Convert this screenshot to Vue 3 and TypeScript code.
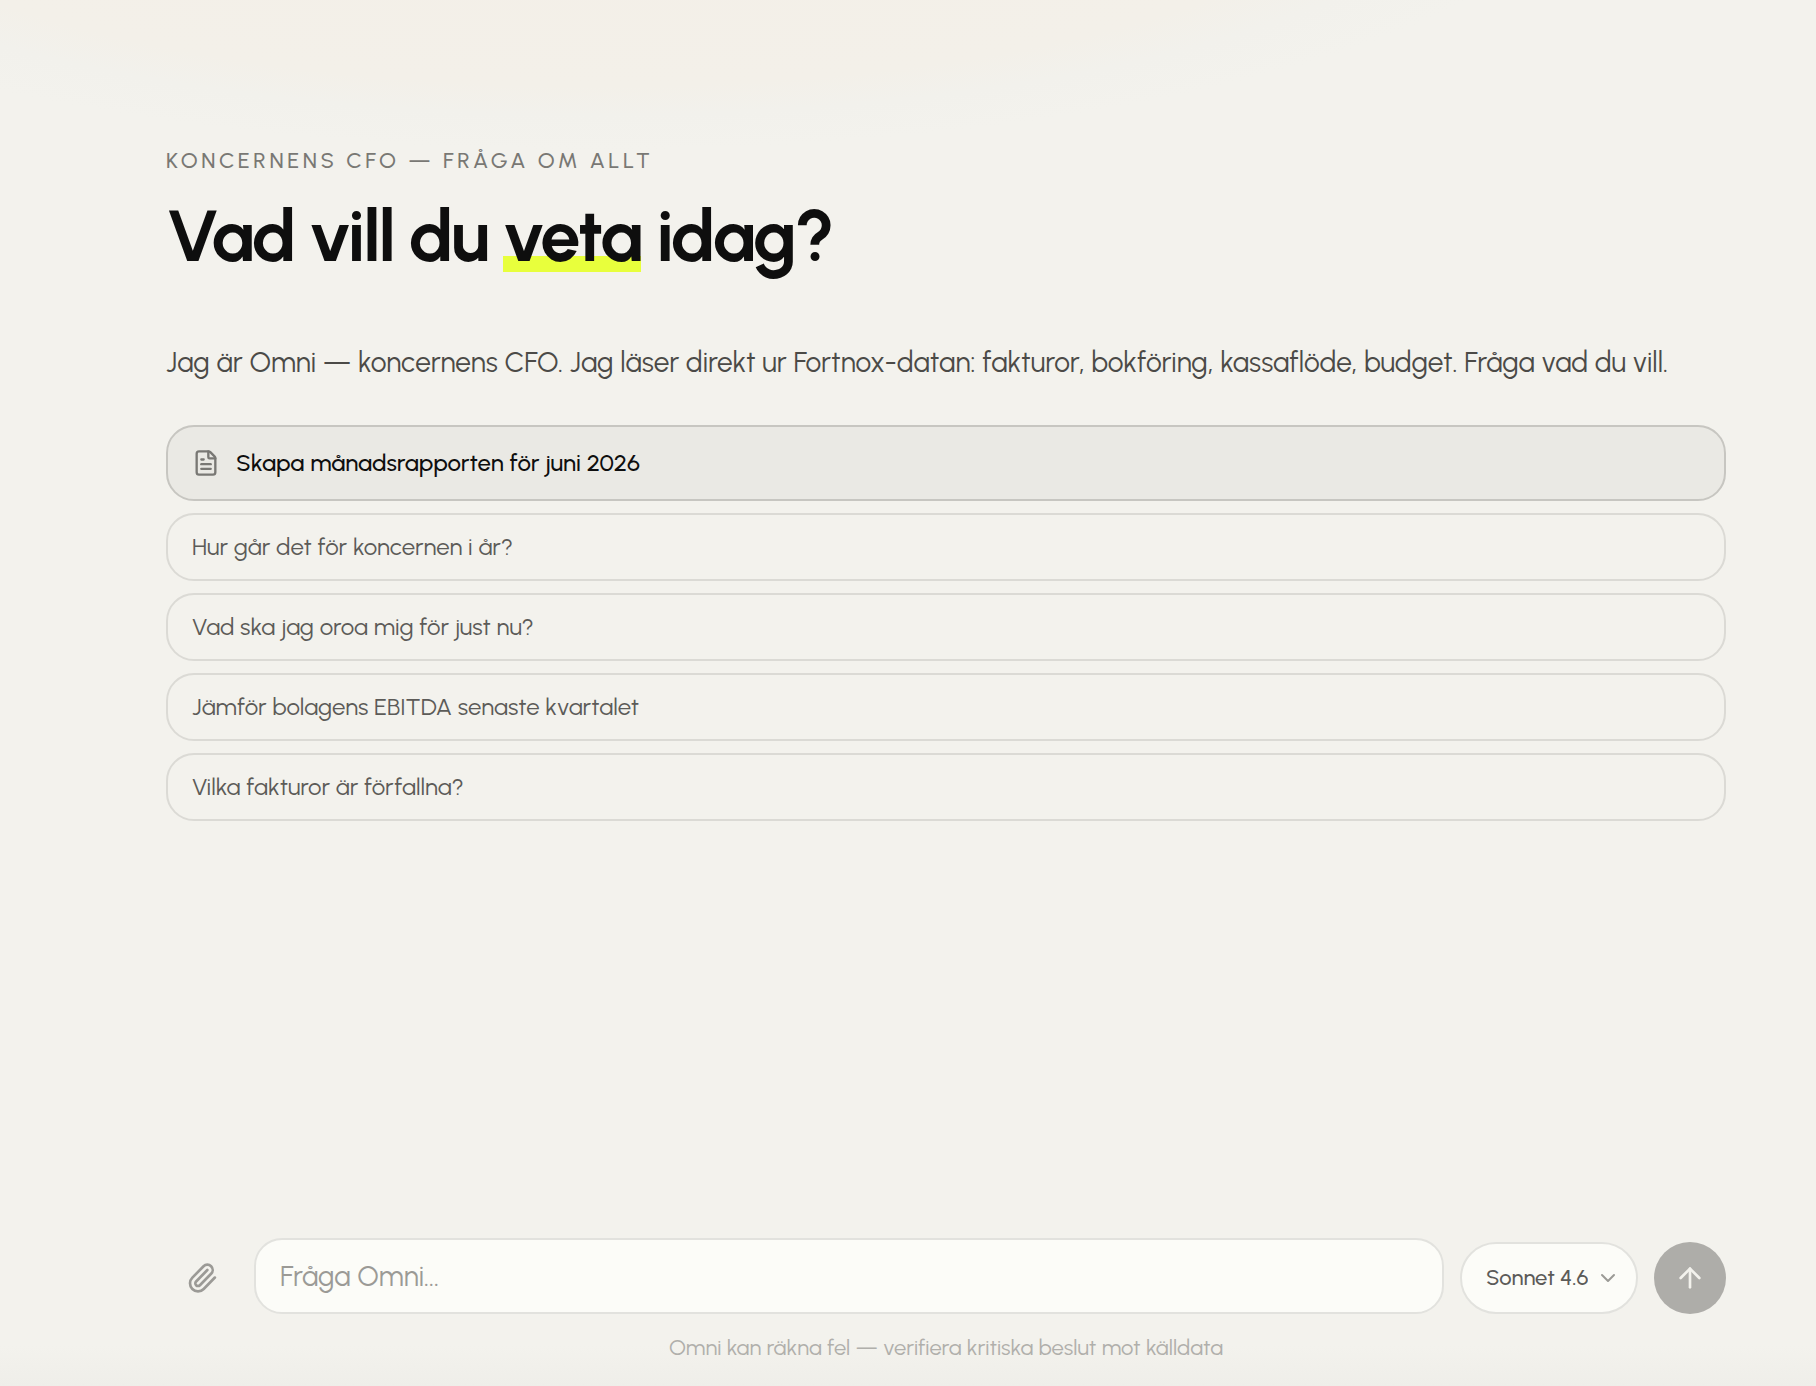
<script setup lang="ts">
import { ref } from 'vue'

const suggestions: string[] = [
  'Hur går det för koncernen i år?',
  'Vad ska jag oroa mig för just nu?',
  'Jämför bolagens EBITDA senaste kvartalet',
  'Vilka fakturor är förfallna?',
]
const models: string[] = ['Sonnet 4.6']

const question = ref('')
const model = ref(models[0])

function ask(text: string) {
  question.value = text
}
</script>

<template>
  <main class="page">
    <header class="intro">
      <p class="eyebrow">Koncernens CFO — Fråga om allt</p>
      <h1 class="title">Vad vill du <span class="mark">veta</span> idag?</h1>
    </header>

    <section class="start">
      <p class="lead">
        Jag är Omni — koncernens CFO. Jag läser direkt ur Fortnox-datan: fakturor, bokföring, kassaflöde, budget. Fråga vad du vill.
      </p>
      <div class="suggestions">
        <button type="button" class="card primary" @click="ask('Skapa månadsrapporten för juni 2026')">
          <svg class="doc" viewBox="0 0 24 24" aria-hidden="true">
            <path d="M6 22a2 2 0 0 1-2-2V4a2 2 0 0 1 2-2h8a2.4 2.4 0 0 1 1.704.706l3.588 3.588A2.4 2.4 0 0 1 20 8v12a2 2 0 0 1-2 2z" />
            <path d="M14 2v5a1 1 0 0 0 1 1h5" />
            <path d="M10 9H8" />
            <path d="M16 13H8" />
            <path d="M16 17H8" />
          </svg>
          Skapa månadsrapporten för juni 2026
        </button>
        <button v-for="s in suggestions" :key="s" type="button" class="card" @click="ask(s)">{{ s }}</button>
      </div>
    </section>

    <footer class="dock">
      <form class="composer" @submit.prevent>
        <button type="button" class="attach" aria-label="Bifoga fil">
          <svg viewBox="0 0 24 24" aria-hidden="true">
            <path d="m16 6-8.414 8.586a2 2 0 0 0 2.829 2.829l8.414-8.586a4 4 0 1 0-5.657-5.657l-8.379 8.551a6 6 0 1 0 8.485 8.485l8.379-8.551" />
          </svg>
        </button>
        <input v-model="question" class="field" type="text" placeholder="Fråga Omni..." aria-label="Fråga Omni" />
        <div class="model">
          <select v-model="model" aria-label="Modell">
            <option v-for="m in models" :key="m" :value="m">{{ m }}</option>
          </select>
          <svg viewBox="0 0 24 24" aria-hidden="true"><path d="m6 9 6 6 6-6" /></svg>
        </div>
        <button type="submit" class="send" aria-label="Skicka" :disabled="!question">
          <svg viewBox="0 0 24 24" aria-hidden="true">
            <path d="m5 12 7-7 7 7" />
            <path d="M12 19V5" />
          </svg>
        </button>
      </form>
      <p class="note">Omni kan räkna fel — verifiera kritiska beslut mot källdata</p>
    </footer>
  </main>
</template>

<style>
body {
  margin: 0;
  background: #f3f2ed;
}
</style>

<style scoped>
* {
  box-sizing: border-box;
}

.page {
  display: flex;
  flex-direction: column;
  min-height: 100vh;
  padding: 144px 90px 22px 166px;
  font-family: Urbanist, Inter, 'Liberation Sans', sans-serif;
  color: #0e0e0e;
  background:
    linear-gradient(to top, #efeee9, rgba(239, 238, 233, 0) 40px),
    radial-gradient(993px 290px at 600px -140px, #f3efe7 0%, #f3f0e9 78%, #f2f1ec 88%, #f3f2ed 100%);
}

p,
h1 {
  margin: 0;
}

button,
input,
select {
  font: inherit;
  color: inherit;
}

svg {
  flex: none;
  fill: none;
  stroke: currentColor;
  stroke-width: 2;
  stroke-linecap: round;
  stroke-linejoin: round;
}

.eyebrow {
  font-size: 22px;
  line-height: 34px;
  font-weight: 500;
  letter-spacing: 0.16em;
  text-transform: uppercase;
  color: #797874;
}

.title {
  margin-top: 18px;
  font-size: 72px;
  line-height: 80px;
  font-weight: 700;
  letter-spacing: -0.03em;
}

.mark {
  background: linear-gradient(#e8ff3c, #e8ff3c) 0 63px / 100% 16px no-repeat;
}

.lead {
  margin-top: 64px;
  font-size: 28px;
  line-height: 44px;
  font-weight: 400;
  color: #4b4a47;
}

.suggestions {
  display: flex;
  flex-direction: column;
  gap: 12px;
  margin-top: 41px;
}

.card {
  display: flex;
  align-items: center;
  gap: 16px;
  height: 68px;
  padding: 0 24px;
  border: 2px solid #dbdad5;
  border-radius: 28px;
  background: none;
  font-size: 24px;
  line-height: 28px;
  font-weight: 400;
  text-align: left;
  color: #5c5b58;
}

.primary {
  height: 76px;
  border-color: #c7c6c1;
  background: #eae9e4;
  font-weight: 500;
  color: #0e0e0e;
}

.doc {
  width: 28px;
  height: 28px;
  color: #797874;
}

.dock {
  margin-top: auto;
}

.composer {
  display: flex;
  align-items: flex-end;
  gap: 16px;
}

.attach,
.send {
  display: flex;
  align-items: center;
  justify-content: center;
  flex: none;
  width: 72px;
  height: 72px;
  padding: 0;
  border: 0;
  border-radius: 50%;
  background: none;
  color: #9b9a96;
}

.attach svg {
  width: 32px;
  height: 32px;
}

.send {
  background: #aeada9;
  color: #f3f2ed;
}

.send svg {
  width: 32px;
  height: 32px;
}

.field {
  flex: 1;
  min-width: 0;
  height: 76px;
  padding: 0 24px;
  border: 2px solid #e2e2de;
  border-radius: 28px;
  outline: none;
  background: #fcfcf8;
  font-size: 28px;
  font-weight: 400;
}

.field::placeholder {
  color: #9b9a96;
  opacity: 1;
}

.model {
  display: grid;
  align-items: center;
  width: 178px;
}

.model > * {
  grid-area: 1 / 1;
}

.model select {
  appearance: none;
  width: 100%;
  height: 72px;
  padding: 0 48px 2px 24px;
  border: 2px solid #e2e2de;
  border-radius: 36px;
  background: #fcfcf8;
  font-size: 22px;
  font-weight: 500;
  color: #5c5b58;
}

.model svg {
  justify-self: end;
  width: 24px;
  height: 24px;
  margin-right: 18px;
  color: #9b9a96;
  pointer-events: none;
}

.note {
  margin-top: 18px;
  font-size: 22px;
  line-height: 32px;
  font-weight: 400;
  text-align: center;
  color: #b0afab;
}
</style>
